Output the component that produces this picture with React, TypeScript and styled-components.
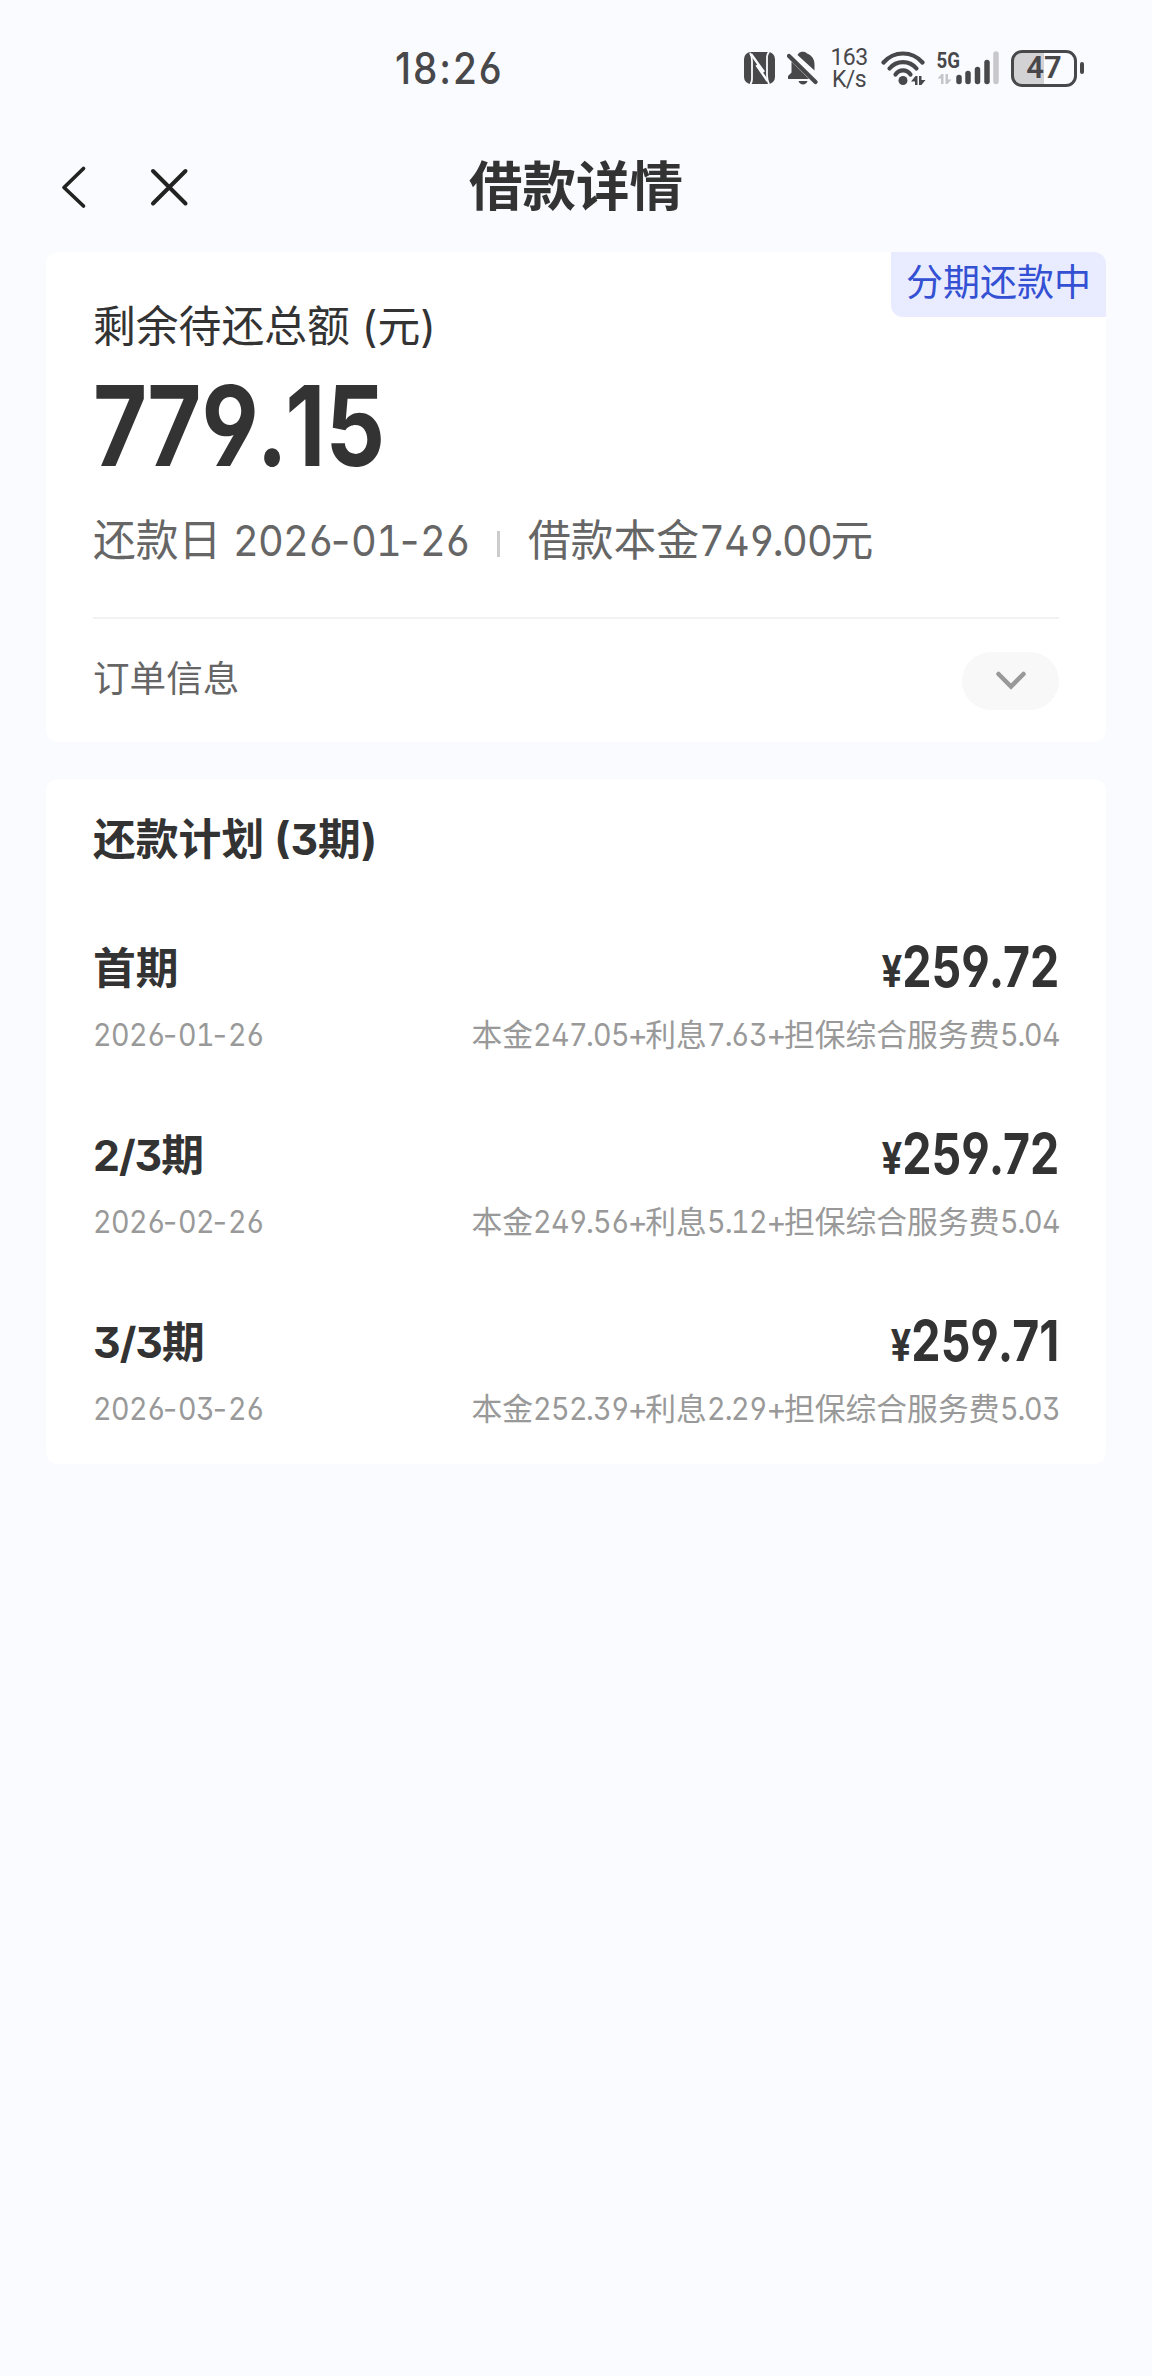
import React from "react";
import styled, { createGlobalStyle } from "styled-components";

const INK = "#333333";
const STATUS = "#48484b";

const GlobalStyle = createGlobalStyle`
  *, *::before, *::after { box-sizing: border-box; }
  html, body { margin: 0; padding: 0; background: #fafbff; }
  body {
    font-family: Inter, "Noto Sans CJK SC", sans-serif;
    font-feature-settings: "ss01" 1, "cv03" 1, "cv04" 1;
    font-kerning: none;
    color: ${INK};
  }
`;

const Screen = styled.div`
  width: 1152px;
  min-height: 2376px;
  background: #fafbff;
`;

const StatusBar = styled.header`
  height: 136px;
  padding: 0 68px 0 395px;
  display: flex;
  align-items: center;
  justify-content: space-between;
  color: ${STATUS};
`;

const Clock = styled.time`
  font-size: 43.5px;
  line-height: 50px;
  font-weight: 500;
  letter-spacing: 2.2px;
  transform: scaleX(0.89);
  transform-origin: left;
`;

const StatusIcons = styled.div`
  display: flex;
  align-items: center;
`;

const NetSpeed = styled.div`
  width: 36px;
  margin: 2px 14px 0 13px;
  display: flex;
  flex-direction: column;
  align-items: center;
  font: 400 23px/22px Roboto, sans-serif;
  letter-spacing: -0.6px;
`;

const Battery = styled.div`
  width: 66px;
  height: 37px;
  margin-left: 11px;
  border: 3px solid ${STATUS};
  border-radius: 11px;
  background: linear-gradient(90deg, #d2d2d4 50%, transparent 50%);
  display: flex;
  align-items: center;
  justify-content: center;
  font: 600 31px/32px Roboto, sans-serif;
`;

const BatteryTip = styled.div`
  width: 4px;
  height: 12px;
  margin-left: 3px;
  border-radius: 2px;
  background: ${STATUS};
`;

const NavBar = styled.nav`
  height: 101px;
  padding: 0 58px;
  display: grid;
  grid-template-columns: 200px 1fr 200px;
  align-items: center;
`;

const NavActions = styled.div`
  display: flex;
  align-items: center;
  gap: 59px;
`;

const IconButton = styled.button`
  border: 0;
  padding: 0;
  background: none;
  display: flex;
`;

const Title = styled.h1`
  margin: 0;
  font-size: 53.5px;
  line-height: 60px;
  font-weight: 700;
  text-align: center;
`;

const Content = styled.main`
  padding: 15px 46px 0;
  display: flex;
  flex-direction: column;
  gap: 37px;
`;

const Card = styled.section<{ $height: number }>`
  position: relative;
  height: ${(p) => p.$height}px;
  padding: 0 47px;
  border-radius: 12px;
  background: #ffffff;
`;

const Tag = styled.span`
  position: absolute;
  top: 0;
  right: 0;
  width: 215px;
  height: 65px;
  border-radius: 0 12px 0 12px;
  background: #e9ecfe;
  color: #3450d3;
  font-size: 37px;
  line-height: 62px;
  text-align: center;
`;

const AmountLabel = styled.div`
  padding-top: 49px;
  font-size: 42.8px;
  line-height: 52px;
`;

const Total = styled.div`
  margin-top: 23px;
  height: 100px;
  font-size: 111px;
  line-height: 100px;
  font-weight: 700;
  transform: scaleX(0.84);
  transform-origin: left;
`;

const Facts = styled.div`
  margin-top: 38px;
  height: 54px;
  display: flex;
  align-items: center;
  font-size: 42.8px;
  line-height: 54px;
  color: #666666;
  white-space: pre;
`;

const FactDivider = styled.i`
  width: 3px;
  height: 26px;
  margin: 6px 28px 0 28px;
  background: #cccccc;
`;

const OrderRow = styled.div`
  margin-top: 49px;
  padding-top: 33px;
  border-top: 2px solid #f2f2f2;
  display: flex;
  align-items: flex-start;
  justify-content: space-between;
  font-size: 36.6px;
  line-height: 54px;
  color: #666666;
`;

const ExpandButton = styled.button`
  width: 97px;
  height: 58px;
  border: 0;
  border-radius: 29px;
  background: #f8f8f8;
  display: flex;
  align-items: center;
  justify-content: center;
`;

const PlanTitle = styled.h2`
  margin: 0;
  padding-top: 34px;
  font-size: 42.8px;
  line-height: 54px;
  font-weight: 700;
`;

const PlanList = styled.ul`
  list-style: none;
  margin: 72px 0 0;
  padding: 0;
`;

const PlanItem = styled.li`
  height: 187px;
`;

const PlanLine = styled.div<{ $minor?: boolean }>`
  display: flex;
  align-items: center;
  justify-content: space-between;
  height: ${(p) => (p.$minor ? 44 : 60)}px;
  margin-top: ${(p) => (p.$minor ? 14 : 0)}px;
  color: ${(p) => (p.$minor ? "#999999" : INK)};
  font-size: ${(p) => (p.$minor ? 30.8 : 42.8)}px;
  line-height: ${(p) => (p.$minor ? 44 : 60)}px;
  font-weight: ${(p) => (p.$minor ? 400 : 700)};
`;

const Digits = styled.span<{ $count: number }>`
  display: inline-block;
  width: ${(p) => p.$count * 0.568}em;
  white-space: nowrap;
  font-variant-numeric: tabular-nums;
  letter-spacing: -0.02em;
  transform: scaleX(0.93);
  transform-origin: left;
`;

const markSpacing: Record<string, number> = { "+": -0.09, ".": -0.06, "-": 0.02 };

const Mark = styled.span<{ $char: string }>`
  letter-spacing: ${(p) => markSpacing[p.$char]}em;
`;

const TermNumber = styled.span`
  letter-spacing: -1px;
`;

const Price = styled.span`
  font-size: 56px;
  transform: scaleX(0.83);
  transform-origin: right;
  small { font-size: 44px; }
`;

const Point = styled.span`
  margin: 0 -0.025em;
`;

const Offset = styled.span<{ $left: number }>`
  display: flex;
  margin-left: ${(p) => p.$left}px;
`;

const SignalSvg = styled.svg`
  overflow: visible;
`;

const NfcIcon = () => (
  <svg width="31" height="32" viewBox="0 0 31 32">
    <rect width="31" height="32" rx="7" fill={STATUS} />
    <path d="M6 1Q8 4 8 9v18q0 3-1.500 5M25 0q-2 2-2 5v18q0 5 2 9" fill="none" stroke="#fafbff" strokeWidth="1.800" />
    <path d="M7 2 20 20M12.500 13 23.500 29" fill="none" stroke="#fafbff" strokeWidth="2.400" />
  </svg>
);

const BellOffIcon = () => (
  <svg width="31" height="34" viewBox="0 0 31 34">
    <path d="M11.500 2.500C13 .3 18.500 .3 20 2.500c5 2 7.500 5.500 7.500 11v6L10.500 4ZM4.500 10.500 22 28H1v-3l3.500-3.500ZM11.500 30h9c-1 4.500-8 4.500-9 0Z" fill={STATUS} />
    <path d="M2 5 28.500 31" stroke={STATUS} strokeWidth="4.200" strokeLinecap="round" />
  </svg>
);

const WifiIcon = () => (
  <svg width="45" height="34" viewBox="0 0 45 34">
    <g fill="none" stroke={STATUS} strokeWidth="4.200" strokeLinecap="round">
      <path d="M2.500 11.500C13 -.5 31 -.5 41.500 11.500" />
      <path d="M8.500 17.500c7-8.500 20-8.500 27 0" />
      <path d="M14.500 23.500c4-5.500 11-5.500 15 0" />
    </g>
    <circle cx="22" cy="29.500" r="4.500" fill={STATUS} />
    <path d="M30 30.500 34.500 25h2v9h-2.500v-3.500ZM44.500 29 40 34.500h-2V25h2.500v4Z" fill={STATUS} />
  </svg>
);

const SignalIcon = () => (
  <SignalSvg width="63" height="36" viewBox="0 0 63 36">
    <text x="-0.5" y="17.500" fontFamily="Roboto" fontSize="21.500" fontWeight="700" textLength="23.500" lengthAdjust="spacingAndGlyphs" fill={STATUS}>5G</text>
    <path d="M0.500 28.500 4.500 24h2v10H4v-5.500ZM14.500 29.500 10.500 34h-2V24H11v5.500Z" fill="#c6c6ca" />
    {[[22, 25], [31, 21], [40.5, 17], [50, 10]].map(([x, y]) => (
      <line key={x} x1={x} x2={x} y1={y + 2.5} y2={31.5} stroke={STATUS} strokeWidth="5.500" strokeLinecap="round" />
    ))}
    <line x1="59" x2="59" y1="4" y2="31.500" stroke="#c8c8cc" strokeWidth="5.500" strokeLinecap="round" />
  </SignalSvg>
);

const plan = [
  { term: "首期", price: "259.72", date: "2026-01-26", detail: "本金247.05+利息7.63+担保综合服务费5.04" },
  { term: "2/3期", price: "259.72", date: "2026-02-26", detail: "本金249.56+利息5.12+担保综合服务费5.04" },
  { term: "3/3期", price: "259.71", date: "2026-03-26", detail: "本金252.39+利息2.29+担保综合服务费5.03" },
];

/* Digits are set tabular and slightly condensed next to the Chinese text. */
const Mixed = ({ text }: { text: string }) => (
  <span>
    {text.split(/(\d+|[.+-])/).filter(Boolean).map((part, i) => {
      if (/^\d/.test(part)) return <Digits key={i} $count={part.length}>{part}</Digits>;
      if (/^[.+-]$/.test(part)) return <Mark key={i} $char={part}>{part}</Mark>;
      return part;
    })}
  </span>
);

const Term = ({ text }: { text: string }) => (
  <span>
    {text.split(/([\d/]+)/).map((part, i) => (i % 2 ? <TermNumber key={i}>{part}</TermNumber> : part))}
  </span>
);

const Money = ({ value }: { value: string }) => {
  const [whole, cents] = value.split(".");
  return <>{whole}<Point>.</Point>{cents}</>;
};

export default function App() {
  return (
    <>
      <GlobalStyle />
      <Screen>
        <StatusBar>
          <Clock>18:26</Clock>
          <StatusIcons>
            <NfcIcon />
            <Offset $left={12}><BellOffIcon /></Offset>
            <NetSpeed><span>163</span><span>K/s</span></NetSpeed>
            <WifiIcon />
            <Offset $left={11}><SignalIcon /></Offset>
            <Battery>47</Battery>
            <BatteryTip />
          </StatusIcons>
        </StatusBar>
        <NavBar>
          <NavActions>
            <IconButton aria-label="返回">
              <svg width="32" height="44" viewBox="0 0 32 44" fill="none" stroke="#222" strokeWidth="3.700" strokeLinecap="round" strokeLinejoin="round"><path d="M25.500 3.500 6 22.500 25.500 41" /></svg>
            </IconButton>
            <IconButton aria-label="关闭">
              <svg width="40" height="40" viewBox="0 0 40 40" fill="none" stroke="#222" strokeWidth="4" strokeLinecap="round"><path d="M4 4 36.500 36.500M36.500 4 4 36.500" /></svg>
            </IconButton>
          </NavActions>
          <Title>借款详情</Title>
        </NavBar>
        <Content>
          <Card $height={490}>
            <Tag>分期还款中</Tag>
            <AmountLabel>剩余待还总额 (元)</AmountLabel>
            <Total><Money value="779.15" /></Total>
            <Facts>
              <Mixed text="还款日 2026-01-26" />
              <FactDivider />
              <Mixed text="借款本金749.00元" />
            </Facts>
            <OrderRow>
              订单信息
              <ExpandButton aria-label="展开">
                <svg width="32" height="20" viewBox="0 0 32 20" fill="none" stroke="#999" strokeWidth="4.500" strokeLinecap="round"><path d="M3.500 3 16 15.500 28.500 3" /></svg>
              </ExpandButton>
            </OrderRow>
          </Card>
          <Card $height={685}>
            <PlanTitle>还款计划 (3期)</PlanTitle>
            <PlanList>
              {plan.map((p) => (
                <PlanItem key={p.term}>
                  <PlanLine><Term text={p.term} /><Price><small>¥</small><Money value={p.price} /></Price></PlanLine>
                  <PlanLine $minor><Mixed text={p.date} /><Mixed text={p.detail} /></PlanLine>
                </PlanItem>
              ))}
            </PlanList>
          </Card>
        </Content>
      </Screen>
    </>
  );
}
